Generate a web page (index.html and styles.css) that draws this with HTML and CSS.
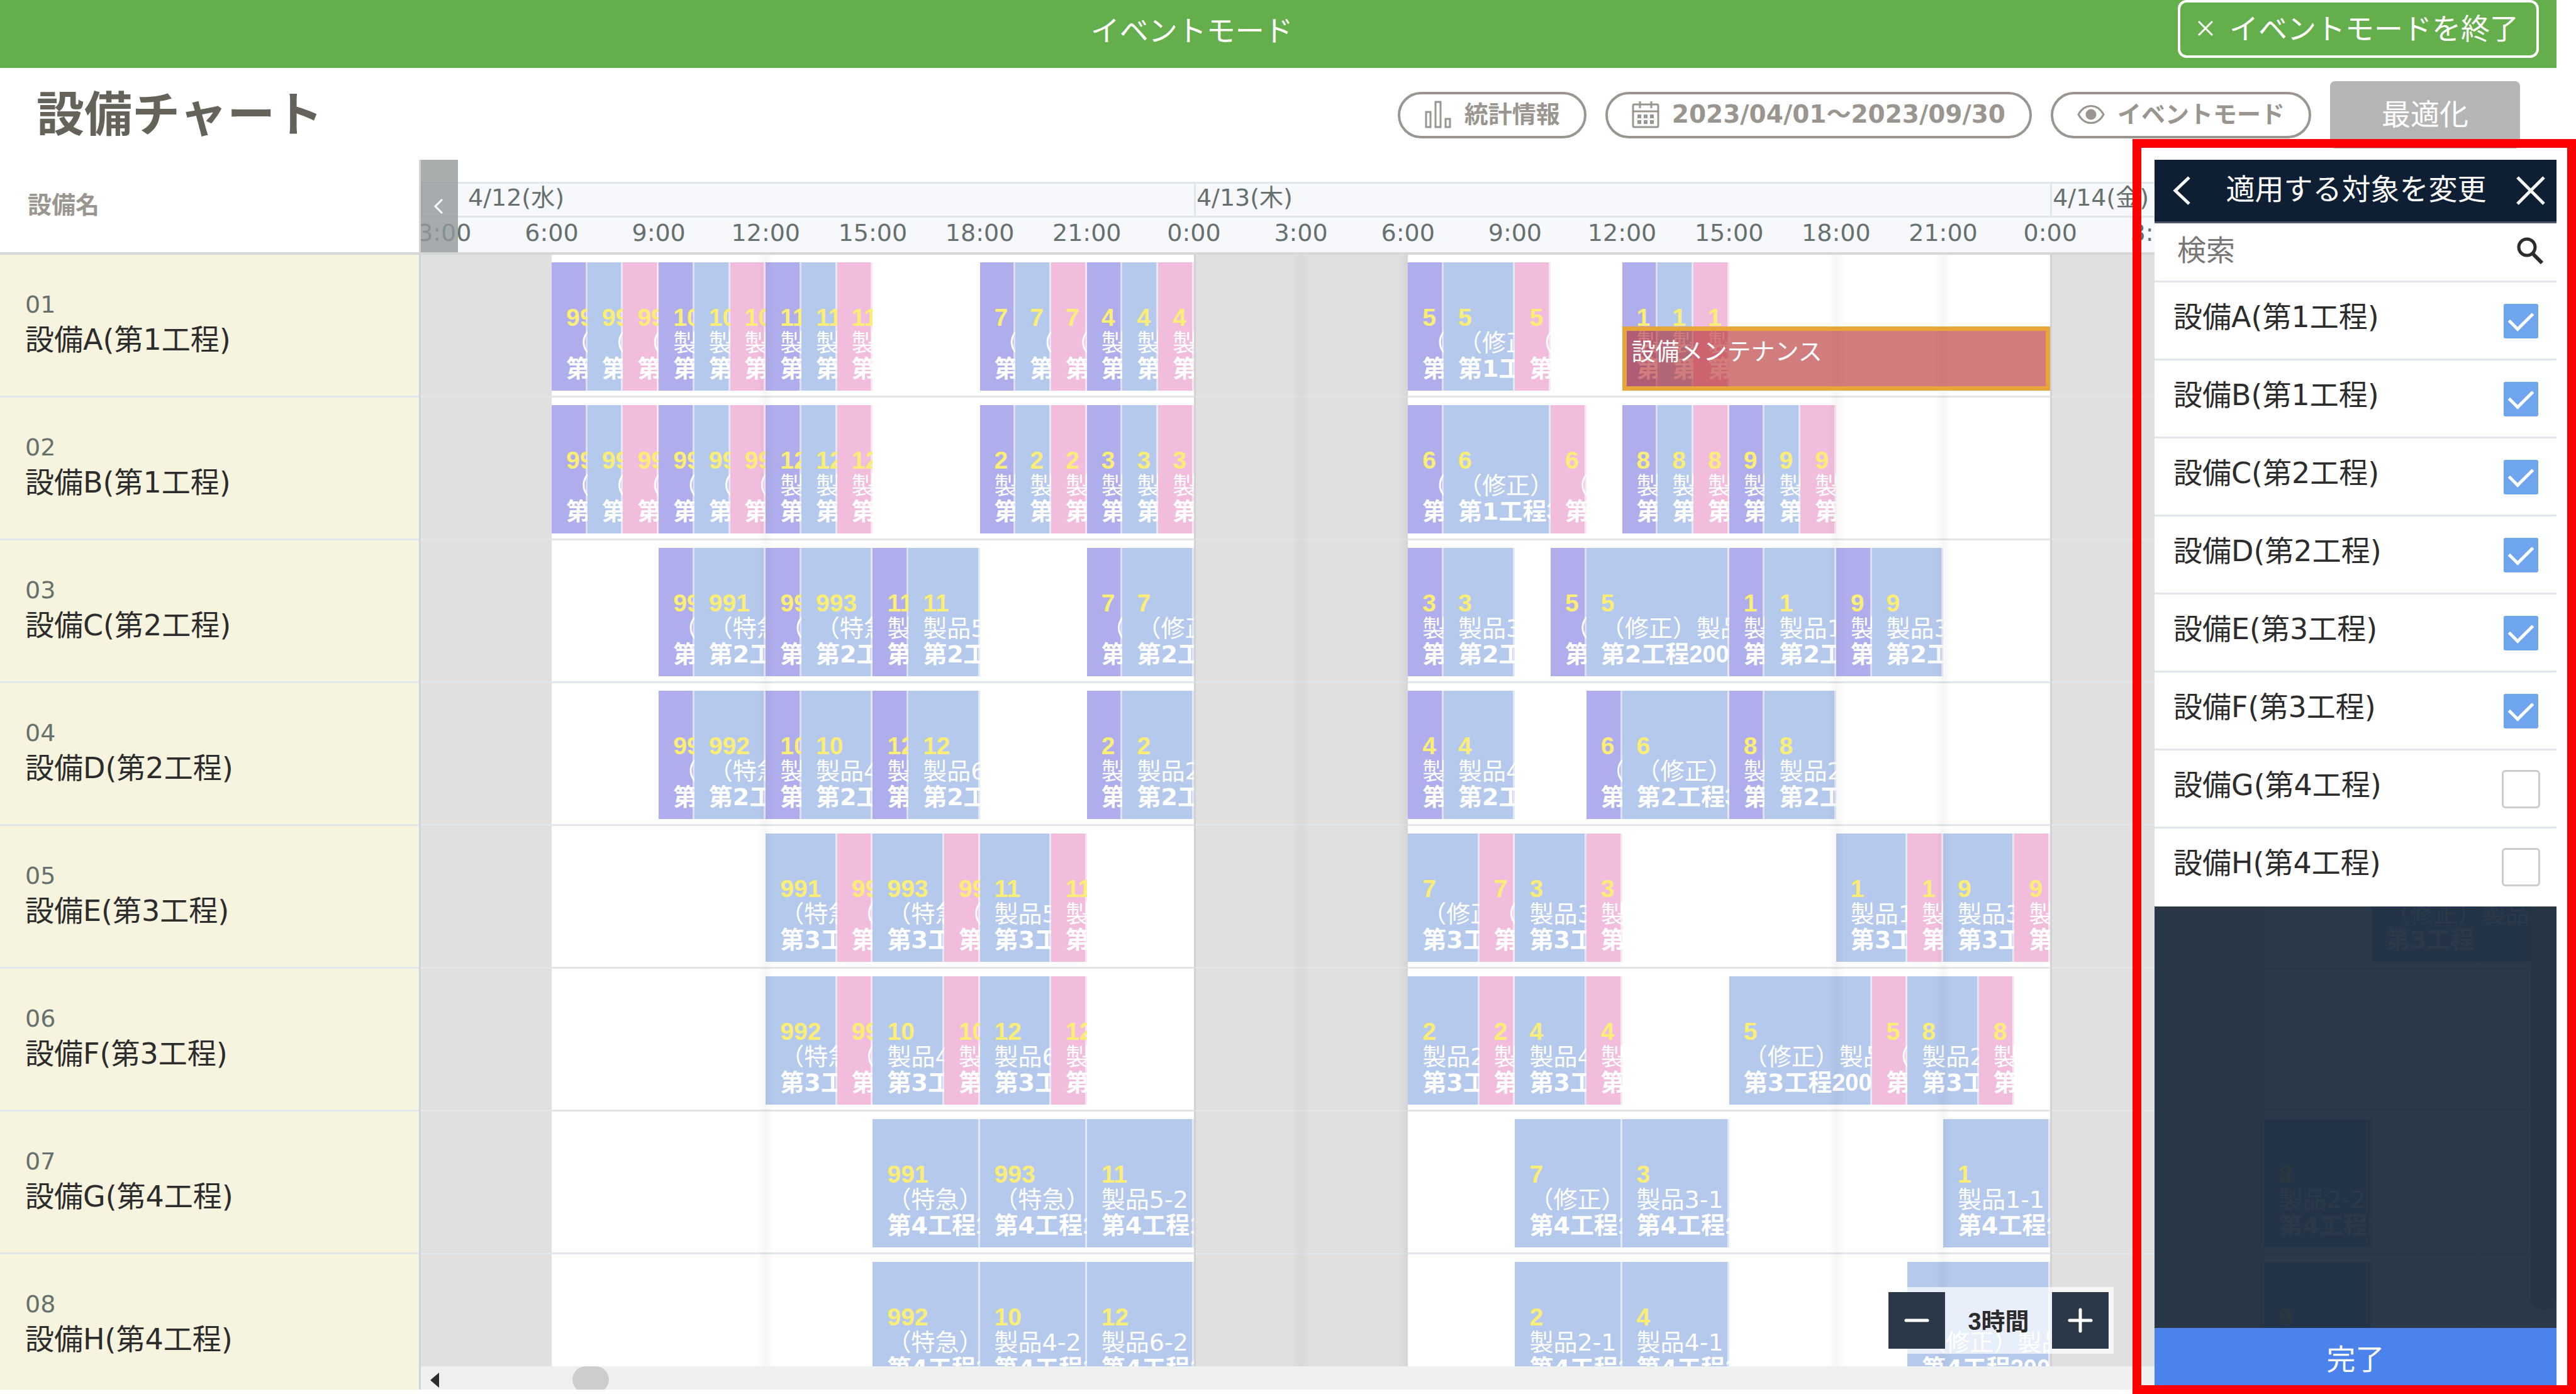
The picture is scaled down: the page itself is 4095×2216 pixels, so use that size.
FILE: index.html
```html
<!DOCTYPE html>
<html lang="ja">
<head>
<meta charset="utf-8">
<title>設備チャート</title>
<link rel="stylesheet" href="styles.css">
</head>
<body>
<div class="app">
  <div class="modebar">
    <p class="modebar-title">イベントモード</p>
    <button class="exit" type="button">
      <svg class="exit-icon" viewBox="0 0 24 24"><path d="M1 1 23 23M23 1 1 23"/></svg>
      イベントモードを終了
    </button>
  </div>

  <header class="page-head">
    <h1 class="page-title">設備チャート</h1>
    <div class="actions">
      <button class="pill" type="button">
        <svg class="pill-icon" viewBox="0 0 44 44"><path d="M3 18h7v24H3zM18 2h8v40h-8zM34 29h7v13h-7z"/></svg>
        統計情報
      </button>
      <button class="pill pill-date" type="button">
        <svg class="pill-icon" viewBox="0 0 44 44"><rect x="2" y="6" width="40" height="36" rx="2"/><path d="M2 17h40M13 1v11M31 1v11"/><path class="dots" d="M9 25h26M9 34h26"/></svg>
        2023/04/01～2023/09/30
      </button>
      <button class="pill" type="button">
        <svg class="pill-icon" viewBox="0 0 44 44"><path d="M2 22C12 4 32 4 42 22 32 40 12 40 2 22z"/><circle class="solid" cx="22" cy="22" r="7"/></svg>
        イベントモード
      </button>
      <button class="optimize" type="button">最適化</button>
    </div>
  </header>

  <main class="board">
    <section class="machines">
      <h2 class="machines-head">設備名</h2>
      <ul class="machine-list" id="machines"></ul>
    </section>
    <section class="chart">
      <div class="scale">
        <div class="dates" id="dates"></div>
        <div class="times" id="times"></div>
        <button class="collapse" type="button" aria-label="閉じる">
          <svg viewBox="0 0 16 26"><path d="M14 2 3 13 14 24"/></svg>
        </button>
      </div>
      <div class="canvas">
        <div class="layer" id="closed"></div>
        <div class="rows" id="rows"></div>
        <div class="layer" id="streaks"></div>
        <div class="vbar"><div class="vthumb"></div></div>
        <div class="zoom">
          <button class="zoom-btn" type="button" aria-label="縮小"><svg viewBox="0 0 40 40"><path d="M3 20h34"/></svg></button>
          <span class="zoom-label">3時間</span>
          <button class="zoom-btn" type="button" aria-label="拡大"><svg viewBox="0 0 40 40"><path d="M3 20h34M20 3v34"/></svg></button>
        </div>
      </div>
      <div class="hbar">
        <svg class="hbar-arrow" viewBox="0 0 14 24"><path d="M14 0v24L0 12z"/></svg>
        <div class="hthumb"></div>
      </div>
    </section>
  </main>

  <aside class="panel">
    <div class="panel-head">
      <button class="panel-btn" type="button" aria-label="戻る"><svg viewBox="0 0 46 46"><path d="M29 2 7 23 29 44"/></svg></button>
      <h2 class="panel-title">適用する対象を変更</h2>
      <button class="panel-btn" type="button" aria-label="閉じる"><svg viewBox="0 0 46 46"><path d="M2 2 44 44M44 2 2 44"/></svg></button>
    </div>
    <div class="search">
      <input class="search-input" type="text" placeholder="検索" aria-label="検索">
      <svg class="search-icon" viewBox="0 0 44 44"><circle cx="17" cy="17" r="13"/><path class="grip" d="M26 27 41 42"/></svg>
    </div>
    <div class="targets" id="targets"></div>
    <div class="shade"></div>
    <button class="done" type="button">完了</button>
  </aside>
</div>
<div class="callout"></div>
<script src="chart.js"></script>
</body>
</html>
```

FILE: styles.css
```css
:root {
  --hour: 1.386vw;
  --slot: calc(var(--hour) / 3);
  --line: #e1e6ea;
  --sans: "DejaVu Sans", "Noto Sans CJK JP", sans-serif;
  --tight: "Liberation Sans", "Noto Sans CJK JP", sans-serif;
}

* { box-sizing: border-box; }

body {
  margin: 0;
  position: relative;
  height: 100vh;
  overflow: hidden;
  background: #fff;
  color: #2c2c2c;
  font-family: var(--sans);
  font-size: 46px;
}

h1, h2, p, ul { margin: 0; padding: 0; }

button {
  padding: 0;
  border: 0;
  background: none;
  color: inherit;
  font: inherit;
}

svg {
  fill: none;
  stroke: currentColor;
  stroke-width: 3;
}

.app {
  position: relative;
  display: flex;
  flex-direction: column;
  height: calc(100vh - 7px);
  margin-right: 31px;
}

/* Mode bar */
.modebar {
  display: flex;
  align-items: flex-start;
  flex: none;
  height: 108px;
  padding: 0 28px 0 8vw;
  background: #64ae4c;
  color: #fff;
}

.modebar-title {
  flex: 1;
  line-height: 98px;
  text-align: center;
}

.exit {
  display: flex;
  align-items: center;
  gap: 26px;
  height: 92px;
  padding: 0 28px 8px;
  border: 4px solid #fff;
  border-radius: 14px;
}

.exit-icon { width: 24px; height: 24px; margin-top: 6px; }

/* Page header */
.page-head {
  display: flex;
  align-items: flex-start;
  justify-content: space-between;
  flex: none;
  height: 146px;
  padding: 21px 58px 0;
}

.page-title {
  color: #65625a;
  font-size: 76px;
  line-height: 108px;
}

.actions {
  display: flex;
  align-items: center;
  gap: 30px;
}

.pill {
  display: flex;
  align-items: center;
  gap: 20px;
  height: 74px;
  padding: 0 38px 2px;
  border: 4px solid #9a968f;
  border-radius: 37px;
  color: #9a968f;
  font-size: 38px;
  font-weight: bold;
  line-height: 44px;
}

.pill-date { font-size: 39px; }
.pill-icon { width: 44px; height: 44px; }
.pill-icon .dots { stroke-width: 6; stroke-dasharray: 6 4; }
.pill-icon .solid { fill: currentColor; }

.optimize {
  width: 302px;
  height: 107px;
  padding-bottom: 10px;
  border-radius: 8px;
  background: #b5b5b5;
  color: #fff;
}

/* Board */
.board {
  display: grid;
  grid-template-columns: 669px minmax(0, 1fr);
  flex: 1;
  min-height: 0;
}

.machines {
  overflow: hidden;
  border-right: 3px solid #cfd4d6;
}

.machines-head {
  height: 151px;
  padding: 50px 44px 0;
  border-bottom: 4px solid #d5d8d9;
  background: #fff;
  color: #9a968f;
  font-size: 38px;
  line-height: 44px;
}

.machine-list { list-style: none; }

.machine {
  display: flex;
  flex-direction: column;
  height: 227px;
  padding: 51px 40px 0;
  border-bottom: 3px solid var(--line);
  background: #f6f3de;
  line-height: 56px;
}

.machine-no {
  color: #66706f;
  font-size: 38px;
}

.chart {
  display: flex;
  flex-direction: column;
  min-height: 0;
}

.scale {
  position: relative;
  flex: none;
  height: 151px;
  padding-top: 35px;
  overflow: hidden;
  border-bottom: 4px solid #d5d8d9;
  color: #66706f;
  font-size: 38px;
  white-space: nowrap;
}

.dates, .times, .layer, .row {
  display: grid;
  grid-template-columns: repeat(180, var(--slot));
}

.dates, .times {
  border-top: 3px solid var(--line);
  background: #f6f8fb;
}

.dates { height: 54px; line-height: 44px; }
.times { height: 58px; line-height: 48px; }

.date {
  grid-row: 1;
  grid-column: var(--at) / span 72;
  padding-left: 1px;
  border-left: 3px solid var(--line);
}

.date-first { padding-left: 72px; }

.time {
  grid-row: 1;
  grid-column: var(--at);
  display: flex;
  justify-content: center;
  width: 0;
}

.collapse {
  position: absolute;
  inset: 0 auto 0 0;
  width: 59px;
  padding: 0 3px 0 0;
  background: rgba(146, 152, 154, .8);
  color: #fff;
}

.collapse svg { width: 16px; height: 26px; margin-top: 10px; }

.canvas {
  position: relative;
  flex: 1;
  min-height: 0;
  overflow: hidden;
}

.layer {
  position: absolute;
  inset: 0;
  pointer-events: none;
}

.closed {
  grid-row: 1;
  grid-column: var(--at) / span var(--len);
  background: #e0e0e0;
}

.streak {
  grid-row: 1;
  grid-column: var(--at);
  width: 28px;
  margin-left: -14px;
  background: linear-gradient(90deg, transparent, rgba(0, 0, 0, .035), transparent);
}

.streak-left {
  width: 14px;
  background: linear-gradient(90deg, transparent, rgba(0, 0, 0, .05));
}

.streak-edge {
  width: 3px;
  margin-left: 0;
  background: rgba(0, 0, 0, .06);
}

.rows { position: relative; }

.row {
  height: 227px;
  padding: 12px 0 8px;
  border-bottom: 3px solid var(--line);
}

.job {
  grid-row: 1;
  grid-column: var(--at) / span var(--len);
  display: flex;
  flex-direction: column;
  justify-content: flex-end;
  padding: 0 0 14px 23px;
  overflow: hidden;
  color: #fff;
  font-size: 38px;
  line-height: 41px;
  white-space: nowrap;
  box-shadow: inset -3px 0 rgba(255, 255, 255, .6);
}

.job-prep { background: #afadec; }
.job-main { background: #b5c9ed; }
.job-post { background: #f2bddd; }

.job-no {
  color: #fbee76;
  font-family: var(--tight);
  font-size: 39px;
  font-weight: bold;
}

.job-step { font-weight: bold; }
.job-qty { font-family: var(--tight); }

.upkeep {
  z-index: 1;
  grid-row: 1;
  grid-column: var(--at) / span var(--len);
  align-self: end;
  height: 102px;
  padding: 10px 8px;
  border: 7px solid #e8a53a;
  background: rgba(178, 38, 38, .6);
  color: #fff;
  font-size: 38px;
  line-height: 46px;
}

.vbar {
  position: absolute;
  inset: 0 0 0 auto;
  width: 41px;
  padding-bottom: 90px;
  background: #eff1f1;
}

.vthumb {
  height: 100%;
  border-radius: 20px;
  background: #cfcdcb;
}

.zoom {
  position: absolute;
  right: 704px;
  bottom: 20px;
  display: flex;
  align-items: center;
  width: 366px;
  padding: 8px;
  background: rgba(255, 255, 255, .7);
}

.zoom-btn {
  display: flex;
  align-items: center;
  justify-content: center;
  width: 90px;
  height: 90px;
  background: #2b3848;
  color: #fff;
}

.zoom-btn svg { width: 40px; height: 40px; stroke-width: 5; stroke-linecap: round; }

.zoom-label {
  flex: 1;
  padding-bottom: 4px;
  font-family: var(--tight);
  font-size: 38px;
  font-weight: bold;
  text-align: center;
}

.hbar {
  display: flex;
  align-items: center;
  flex: none;
  gap: 212px;
  height: 37px;
  padding-left: 15px;
  overflow: hidden;
  background: #eff1f1;
}

.hbar-arrow { width: 14px; height: 24px; margin-top: 6px; fill: #2c2c2c; stroke: none; }

.hthumb {
  align-self: flex-start;
  flex: none;
  width: 58px;
  height: 42px;
  border-radius: 21px;
  background: #cfcdcb;
}

/* Target panel */
.panel {
  position: absolute;
  top: 254px;
  right: 0;
  bottom: 7px;
  display: flex;
  flex-direction: column;
  width: 639px;
}

.panel-head {
  display: flex;
  align-items: center;
  justify-content: space-between;
  height: 101px;
  padding: 0 18px 12px 26px;
  border-bottom: 3px solid #4b5768;
  background: #0f1f33;
  color: #fff;
}

.panel-btn { width: 46px; height: 46px; margin-top: 12px; }
.panel-btn svg { display: block; width: 46px; height: 46px; stroke-width: 5; }

.panel-title {
  padding-right: 6px;
  font-size: 46px;
  font-weight: normal;
}

.search {
  display: flex;
  align-items: center;
  height: 94px;
  padding: 0 20px 6px 36px;
  border-bottom: 3px solid var(--line);
  background: #fff;
}

.search-input {
  flex: 1;
  min-width: 0;
  height: 60px;
  padding: 0;
  border: 0;
  outline: 0;
  background: none;
  font: inherit;
}

.search-input::placeholder { color: #777; }
.search-icon { width: 44px; height: 44px; stroke-width: 5; }
.search-icon .grip { stroke-width: 6; }

.target {
  display: flex;
  justify-content: space-between;
  height: 124px;
  padding: 31px 26px 0 30px;
  border-bottom: 3px solid var(--line);
  background: #fff;
  line-height: 48px;
}

.target:last-child { border-bottom: 0; }

.target-box {
  appearance: none;
  display: flex;
  align-items: center;
  justify-content: center;
  width: 61px;
  height: 61px;
  margin: 0;
  border: 3px solid #ccc;
  border-radius: 6px;
  background: #fff;
}

.target-box:checked {
  border-color: #fff;
  background: #6ea5ec;
}

.target-box:checked::after {
  content: "";
  width: 32px;
  height: 17px;
  margin-bottom: 10px;
  border: solid #fff;
  border-width: 0 0 5px 5px;
  rotate: -45deg;
}

.shade {
  flex: 1;
  background: rgba(20, 35, 53, .9);
}

.done {
  height: 91px;
  background: #4c82ec;
  color: #fff;
}

.callout {
  position: absolute;
  top: 221px;
  right: 0;
  bottom: 0;
  width: 705px;
  border: 14px solid #f00;
  pointer-events: none;
}
```

FILE: chart.js
```js
// Hours count from 4/12 0:00. The visible chart starts at 2:20, in 20-minute slots.
const slot = (h) => h * 3 - 6;

const machines = [
  ["A", 1], ["B", 1], ["C", 2], ["D", 2],
  ["E", 3], ["F", 3], ["G", 4], ["H", 4],
];

const products = {
  1: "製品1-1", 2: "製品2-1", 3: "製品3-1", 4: "製品4-1",
  5: "（修正）製品5-1", 6: "（修正）製品6-1", 7: "（修正）製品1-2",
  8: "製品2-2", 9: "製品3-2", 10: "製品4-2", 11: "製品5-2", 12: "製品6-2",
  991: "（特急）製品1-1", 992: "（特急）製品2-1", 993: "（特急）製品3-1",
};

const quantities = { 5: "200個", 6: "300個" };

// [start hour, order number, preparation h, main h, finishing h]
const jobs = [
  [[6, 991, 1, 1, 1], [9, 10, 1, 1, 1], [12, 11, 1, 1, 1], [18, 7, 1, 1, 1], [21, 4, 1, 1, 1],
   [30, 5, 1, 2, 1], [36, 1, 1, 1, 1]],
  [[6, 992, 1, 1, 1], [9, 993, 1, 1, 1], [12, 12, 1, 1, 1], [18, 2, 1, 1, 1], [21, 3, 1, 1, 1],
   [30, 6, 1, 3, 1], [36, 8, 1, 1, 1], [39, 9, 1, 1, 1]],
  [[9, 991, 1, 2, 0], [12, 993, 1, 2, 0], [15, 11, 1, 2, 0], [21, 7, 1, 2, 0],
   [30, 3, 1, 2, 0], [34, 5, 1, 4, 0], [39, 1, 1, 2, 0], [42, 9, 1, 2, 0]],
  [[9, 992, 1, 2, 0], [12, 10, 1, 2, 0], [15, 12, 1, 2, 0], [21, 2, 1, 2, 0],
   [30, 4, 1, 2, 0], [35, 6, 1, 3, 0], [39, 8, 1, 2, 0]],
  [[12, 991, 0, 2, 1], [15, 993, 0, 2, 1], [18, 11, 0, 2, 1],
   [30, 7, 0, 2, 1], [33, 3, 0, 2, 1], [42, 1, 0, 2, 1], [45, 9, 0, 2, 1], [57, 6, 0, 5, 0, ""]],
  [[12, 992, 0, 2, 1], [15, 10, 0, 2, 1], [18, 12, 0, 2, 1],
   [30, 2, 0, 2, 1], [33, 4, 0, 2, 1], [39, 5, 0, 4, 1], [44, 8, 0, 2, 1]],
  [[15, 991, 0, 3, 0], [18, 993, 0, 3, 0], [21, 11, 0, 3, 0],
   [33, 7, 0, 3, 0], [36, 3, 0, 3, 0], [45, 1, 0, 3, 0], [54, 8, 0, 3, 0]],
  [[15, 992, 0, 3, 0], [18, 10, 0, 3, 0], [21, 12, 0, 3, 0],
   [33, 2, 0, 3, 0], [36, 4, 0, 3, 0], [44, 5, 0, 4, 0], [54, 9, 0, 3, 0]],
];

const fill = (id, html) => { document.getElementById(id).innerHTML = html; };
const place = (at, len) => `style="--at:${at};--len:${len}"`;

function jobHtml([start, no, prep, main, post, qty], step) {
  let at = start;
  return [["prep", prep], ["main", main], ["post", post]].map(([kind, hours]) => {
    if (!hours) return "";
    const html = `<div class="job job-${kind}" ${place(slot(at), hours * 3)}>
      <span class="job-no">${no}</span>
      <span class="job-product">${products[no]}</span>
      <span class="job-step">第${step}工程<span class="job-qty">${qty ?? quantities[no] ?? "100個"}</span></span>
    </div>`;
    at += hours;
    return html;
  }).join("");
}

const upkeep = `<div class="upkeep" ${place(slot(36), 36)}>設備メンテナンス</div>`;

fill("machines", machines.map(([name, step], i) =>
  `<li class="machine"><span class="machine-no">0${i + 1}</span><span>設備${name}(第${step}工程)</span></li>`).join(""));

fill("targets", machines.map(([name, step], i) =>
  `<label class="target">設備${name}(第${step}工程)<input class="target-box" type="checkbox"${i < 6 ? " checked" : ""}></label>`).join(""));

fill("rows", jobs.map((list, i) =>
  `<div class="row">${list.map((job) => jobHtml(job, machines[i][1])).join("")}${i === 0 ? upkeep : ""}</div>`).join(""));

fill("dates",
  `<div class="date date-first" style="--at:1">4/12(水)</div>
   <div class="date" style="--at:${slot(24)}">4/13(木)</div>
   <div class="date" style="--at:${slot(48)}">4/14(金)</div>`);

let times = "";
for (let h = 3; h <= 60; h += 3) {
  times += `<span class="time" style="--at:${slot(h)}">${h % 24}:00</span>`;
}
fill("times", times);

fill("closed",
  `<div class="closed" ${place(1, 11)}></div>
   <div class="closed" ${place(slot(24), 18)}></div>
   <div class="closed" ${place(slot(48), 18)}></div>`);

fill("streaks", [[12, ""], [24, "streak-edge"], [27, ""], [30, "streak-left"],
  [42, ""], [45, ""], [48, "streak-edge"], [60, ""]].map(([h, cls]) =>
  `<div class="streak ${cls}" style="--at:${slot(h)}"></div>`).join(""));
```
